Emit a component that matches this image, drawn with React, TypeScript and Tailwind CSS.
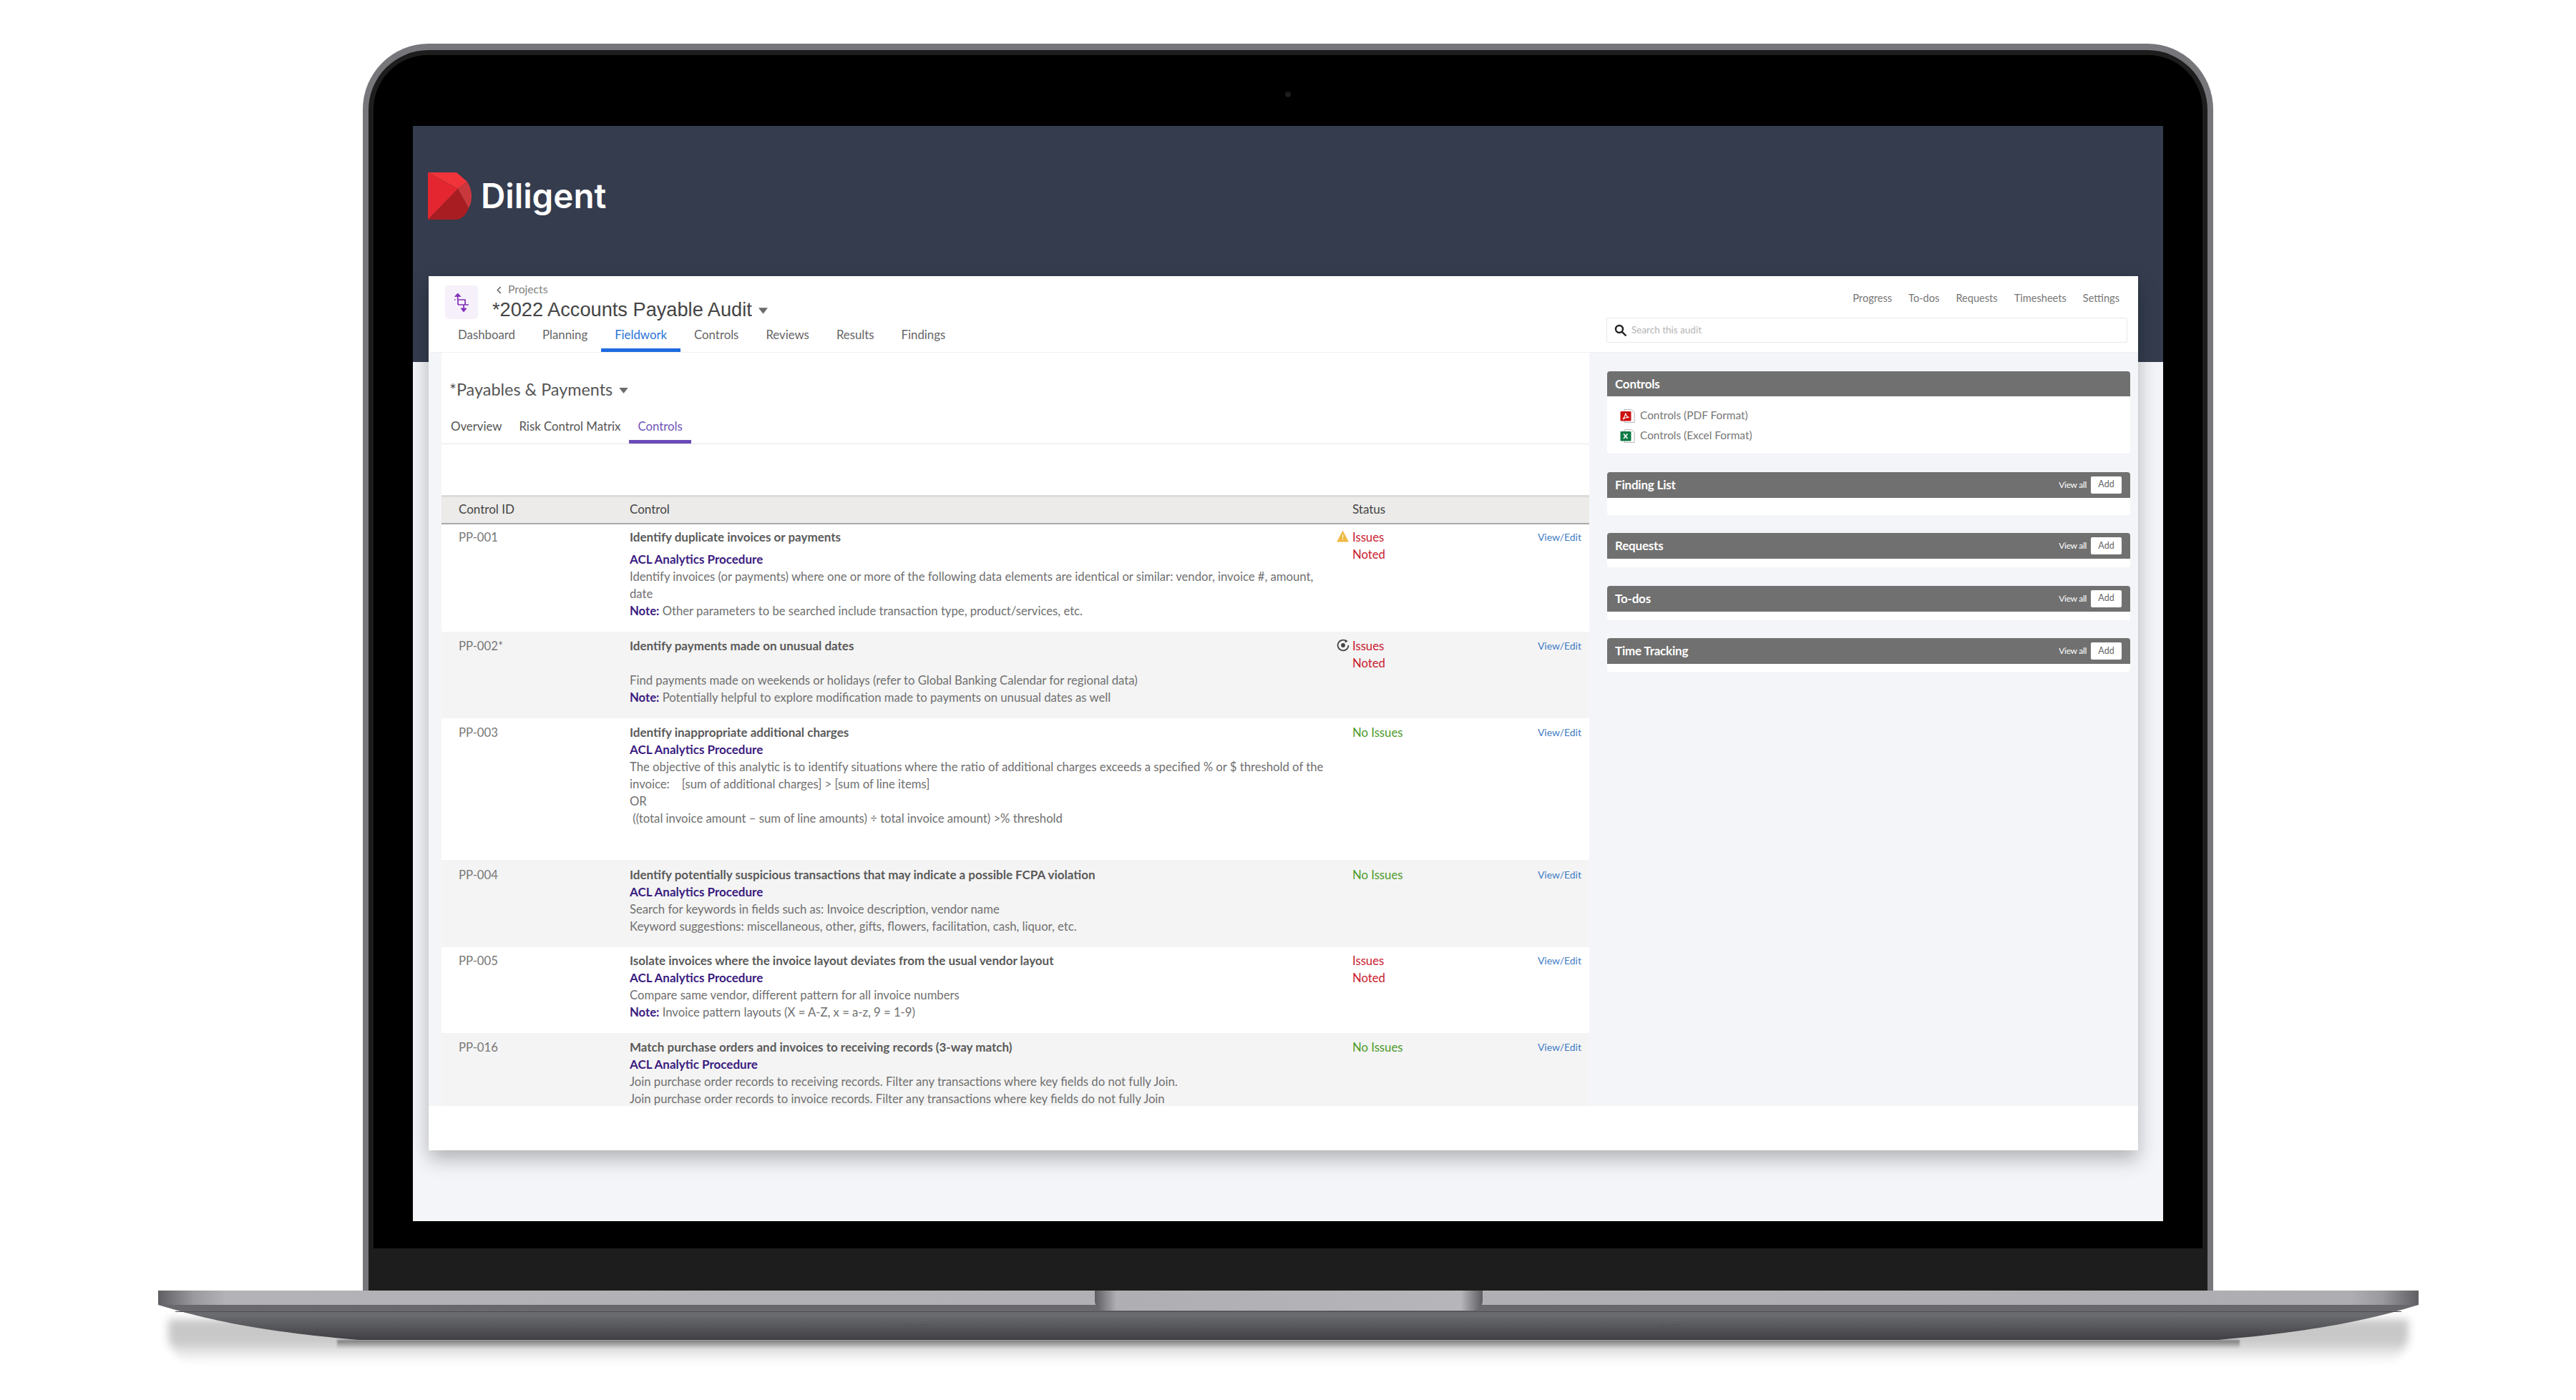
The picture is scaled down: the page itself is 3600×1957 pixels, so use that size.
import React from "react";

const rows = [
  { id: "PP-001", h: "h-[150px]", pt: "pt-[6px]", status: "issues", icon: "warn",
    lines: [["t", "Identify duplicate invoices or payments"], ["a", "ACL Analytics Procedure", "mt-[7px]"],
      ["d", "Identify invoices (or payments) where one or more of the following data elements are identical or similar: vendor, invoice #, amount, date"],
      ["n", "Other parameters to be searched include transaction type, product/services, etc."]] },
  { id: "PP-002*", h: "h-[121px]", pt: "pt-[8px]", status: "issues", icon: "target",
    lines: [["t", "Identify payments made on unusual dates"], ["d", "Find payments made on weekends or holidays (refer to Global Banking Calendar for regional data)", "mt-[24px]"],
      ["n", "Potentially helpful to explore modification made to payments on unusual dates as well"]] },
  { id: "PP-003", h: "h-[198px]", pt: "pt-[8px]", status: "ok",
    lines: [["t", "Identify inappropriate additional charges"], ["a", "ACL Analytics Procedure"],
      ["d", "The objective of this analytic is to identify situations where the ratio of additional charges exceeds a specified % or $ threshold of the invoice:\u00a0\u00a0\u00a0 [sum of additional charges] > [sum of line items]"],
      ["d", "OR"], ["d", "\u00a0((total invoice amount – sum of line amounts) ÷ total invoice amount) >% threshold"]] },
  { id: "PP-004", h: "h-[122px]", pt: "pt-[9px]", status: "ok",
    lines: [["t", "Identify potentially suspicious transactions that may indicate a possible FCPA violation"], ["a", "ACL Analytics Procedure"],
      ["d", "Search for keywords in fields such as: Invoice description, vendor name"],
      ["d", "Keyword suggestions: miscellaneous, other, gifts, flowers, facilitation, cash, liquor, etc."]] },
  { id: "PP-005", h: "h-[120px]", pt: "pt-[7px]", status: "issues",
    lines: [["t", "Isolate invoices where the invoice layout deviates from the usual vendor layout"], ["a", "ACL Analytics Procedure"],
      ["d", "Compare same vendor, different pattern for all invoice numbers"],
      ["n", "Invoice pattern layouts (X = A-Z, x = a-z, 9 = 1-9)"]] },
  { id: "PP-016", h: "h-[103px]", pt: "pt-[8px]", status: "ok",
    lines: [["t", "Match purchase orders and invoices to receiving records (3-way match)"], ["a", "ACL Analytic Procedure"],
      ["d", "Join purchase order records to receiving records. Filter any transactions where key fields do not fully Join."],
      ["d", "Join purchase order records to invoice records. Filter any transactions where key fields do not fully Join"]] },
];

function Caret({ cls }: { cls: string }) {
  return (
    <svg viewBox="0 0 14 9" className={cls}>
      <path d="M0 0H14L7 9Z" fill="#6b6b6b" />
    </svg>
  );
}

function Logo() {
  return (
    <svg viewBox="0 0 61 66" className="w-[61px] h-[66px] shrink-0">
      <path d="M0 0H40L55 13L42 23Z" fill="#f0343a" />
      <path d="M0 0L42 23L0 66Z" fill="#e3262f" />
      <path d="M42 23L57 50C53 60 47 66 38 66H0Z" fill="#a81d22" />
      <path d="M42 23L55 13C59 19 61 26 61 33C61 39 60 45 57 50Z" fill="#c8383c" />
    </svg>
  );
}

function StatusIcon({ kind }: { kind?: string }) {
  if (kind === "warn")
    return (
      <svg viewBox="0 0 17 17" className="w-[17px] h-[17px] mt-[2px]">
        <path d="M8.5 0.5L16.8 16.5H0.2Z" fill="#f0b840" />
        <path d="M7.8 6.5H9.2L9 11.5H8Z M7.8 12.7H9.2V14.1H7.8Z" fill="#fff" />
      </svg>
    );
  if (kind === "target")
    return (
      <svg viewBox="0 0 18 18" className="w-[18px] h-[18px] mt-[2px]" fill="none">
        <path d="M13.6 3.2A7.4 7.4 0 1 0 16.4 9" stroke="#444" strokeWidth="1.8" />
        <path d="M11.5 0.8L15.8 3.3L11.8 5.5Z" fill="#444" />
        <circle cx="9" cy="9" r="2.9" fill="#444" />
      </svg>
    );
  return <div className="w-[18px]" />;
}

function FileIcon({ color, label }: { color: string; label: string }) {
  return (
    <svg viewBox="0 0 21 19" className="w-[21px] h-[19px] shrink-0">
      <path d="M6 0.6H15.5L20.2 4.6V18.4H6Z" fill="#fff" stroke="#b5b5b5" strokeWidth="1" />
      <rect x="0.5" y="3" width="15" height="13.5" rx="1" fill={color} />
      {label === "pdf" ? (
        <path d="M4 14C6 11.5 7.5 8.5 7.8 5.5C8.2 8.5 9.5 10.5 12.5 11.5C9.5 11.2 6.5 12 4 14Z" fill="none" stroke="#fff" strokeWidth="1.2" />
      ) : (
        <path d="M5 6.5L10.5 13M10.5 6.5L5 13" stroke="#fff" strokeWidth="1.7" />
      )}
    </svg>
  );
}

function Widget({ title, h, actions, children }: { title: string; h: string; actions?: boolean; children?: React.ReactNode }) {
  return (
    <div className="rounded-[4px] bg-white">
      <div className={`${h} bg-[#707070] rounded-t-[4px] flex items-center pl-[11px] pr-[12px] text-white`}>
        <span className="text-[17px] font-bold tracking-[-0.2px]">{title}</span>
        {actions && (
          <div className="ml-auto flex items-center gap-[6px]">
            <span className="text-[12px] tracking-[-0.3px]">View all</span>
            <span className="w-[43px] h-[24px] bg-white text-[#666] text-[12.5px] flex items-center justify-center rounded-[2px]">Add</span>
          </div>
        )}
      </div>
      {children}
    </div>
  );
}

export default function App() {
  return (
    <div className="w-[3600px] h-[1957px] bg-white overflow-hidden flex flex-col items-center pt-[61px] [font-family:Lato,sans-serif]">
      {/* Lid */}
      <div className="w-[2586px] h-[1743px] shrink-0 rounded-t-[92px] bg-[#77777b] pt-[9px] px-[8px]">
        <div className="h-full rounded-t-[84px] bg-[#1d1d1d] pt-[7px] px-[7px]">
          <div className="relative h-[1668px] rounded-t-[76px] bg-black pt-[99px] px-[55px]">
            <div className="absolute left-1/2 top-[51px] -ml-[4px] w-[8px] h-[8px] rounded-full bg-[#1c1c1e]" />
            {/* Screen */}
            <div className="h-[1531px] bg-[#f4f5f9] flex flex-col overflow-hidden">
              <div className="h-[330px] shrink-0 bg-[#343c4e] pt-[65px] pl-[21px] flex items-start gap-[13px]">
                <Logo />
                <span className="text-white [font-family:Inter,sans-serif] font-semibold text-[47.5px] leading-[66px]">Diligent</span>
              </div>
              {/* App card */}
              <div className="relative -mt-[120px] ml-[22px] w-[2389px] h-[1222px] shrink-0 bg-white flex flex-col shadow-[0_12px_26px_rgba(0,0,0,0.28)] text-[#555]">
                {/* Header */}
                <div className="h-[107px] shrink-0 flex justify-between border-b border-[#f0f0f4]">
                  <div className="flex flex-col">
                    <div className="h-[64px] flex pl-[23px]">
                      <div className="mt-[13px] w-[46px] h-[47px] rounded-[5px] bg-[#f5f0fa] flex items-center justify-center">
                        <svg viewBox="0 0 22 28" className="w-[22px] h-[28px]" fill="none" stroke="#8230b8" strokeWidth="1.7">
                          <path d="M5.7 5V10M1 10H2.5M5 10H16V17M6 10V17M6 17H21M14 17V22" />
                          <path d="M1.5 5.5L5.7 1L10 5.5Z" fill="#8230b8" strokeWidth="0.8" />
                          <path d="M10 22L14 27L18 22Z" fill="#8230b8" strokeWidth="0.8" />
                        </svg>
                      </div>
                      <div className="mt-[8px] ml-[20px] flex flex-col">
                        <div className="h-[22px] flex items-center text-[15.7px] text-[#808080] pl-[6px]">
                          <svg viewBox="0 0 8 12" className="w-[7px] h-[11px] mr-[9px]" fill="none" stroke="#666" strokeWidth="1.8"><path d="M6.5 1L1.5 6L6.5 11" /></svg>
                          Projects
                        </div>
                        <div className="h-[34px] flex items-center text-[27.2px] text-[#444] [font-family:'Liberation_Sans',sans-serif] whitespace-nowrap">
                          *2022 Accounts Payable Audit
                          <Caret cls="w-[13px] h-[9px] ml-[9px] mt-[2px]" />
                        </div>
                      </div>
                    </div>
                    <div className="h-[43px] flex pl-[22px] text-[16.8px] text-[#666]">
                      {["Dashboard", "Planning", "Fieldwork", "Controls", "Reviews", "Results", "Findings"].map((t) => (
                        <div key={t} className={`px-[19px] pb-[2px] flex items-center border-b-[5px] ${t === "Fieldwork" ? "border-[#1f6be0] text-[#2a74d8]" : "border-transparent"}`}>{t}</div>
                      ))}
                    </div>
                  </div>
                  <div className="w-[743px] pr-[15px] pt-[20px] flex flex-col">
                    <div className="h-[20px] flex justify-end gap-[23px] pr-[11px] text-[14.6px] text-[#777]">
                      {["Progress", "To-dos", "Requests", "Timesheets", "Settings"].map((t) => <span key={t}>{t}</span>)}
                    </div>
                    <div className="mt-[18px] h-[35px] border border-[#e8e8ea] rounded-[2px] flex items-center pl-[10px] gap-[6px]">
                      <svg viewBox="0 0 18 18" className="w-[18px] h-[18px]" fill="none" stroke="#222" strokeWidth="2.4"><circle cx="7" cy="7" r="5" /><path d="M10.8 10.8L16.5 16.5" /></svg>
                      <span className="text-[13.5px] text-[#b5b5b5]">Search this audit</span>
                    </div>
                  </div>
                </div>
                {/* Body */}
                <div className="h-[1053px] shrink-0 flex bg-[#f4f5f8]">
                  <div className="w-[18px] shrink-0" />
                  <div className="w-[1605px] shrink-0 bg-white flex flex-col overflow-hidden border-r border-[#f7f7f7]">
                    <div className="pt-[35px] pl-[11px] h-[83px] shrink-0 flex items-start">
                      <span className="text-[23.4px] leading-[32px] text-[#555] whitespace-nowrap flex items-center">
                        *Payables &amp; Payments
                        <Caret cls="w-[13px] h-[8px] ml-[9px] mt-[3px]" />
                      </span>
                    </div>
                    <div className="h-[45px] shrink-0 flex pl-[1px] border-b border-[#e6e6e6] text-[16.8px]">
                      {["Overview", "Risk Control Matrix", "Controls"].map((t) => (
                        <div key={t} className={`px-[12px] flex items-center border-b-[5px] ${t === "Controls" ? "border-[#6b4cb8] text-[#6f55b8]" : "border-transparent text-[#555]"}`}>{t}</div>
                      ))}
                    </div>
                    <div className="h-[71px] shrink-0" />
                    {/* Table */}
                    <div className="h-[41px] shrink-0 flex items-center pb-[2px] bg-[#ecebe9] border-t-[3px] border-t-[#dddcda] border-b-2 border-b-[#aaaaaa] text-[17px] text-[#444]">
                      <div className="w-[263px] pl-[24px]">Control ID</div>
                      <div className="w-[1010px]">Control</div>
                      <div>Status</div>
                    </div>
                    {rows.map((r, i) => (
                      <div key={r.id} className={`${r.h} ${r.pt} shrink-0 flex overflow-hidden leading-[24px] text-[16.7px] ${i % 2 ? "bg-[#f4f4f4]" : "bg-white"}`}>
                        <div className="w-[263px] shrink-0 pl-[24px] text-[#777]">{r.id}</div>
                        <div className="w-[975px] shrink-0">
                          {r.lines.map((l, j) => {
                            const extra = l[2] ?? "";
                            if (l[0] === "t") return <div key={j} className="font-bold text-[17px] text-[#5a5a5a]">{l[1]}</div>;
                            if (l[0] === "a") return <div key={j} className={`font-bold text-[17px] text-[#3a1b80] ${extra}`}>{l[1]}</div>;
                            if (l[0] === "n") return <div key={j} className="text-[#707070]"><b className="text-[#3a1b80]">Note:</b> {l[1]}</div>;
                            return <div key={j} className={`text-[#707070] ${extra}`}>{l[1]}</div>;
                          })}
                        </div>
                        <div className="flex-1 flex pl-[13px]">
                          <div className="w-[22px] shrink-0"><StatusIcon kind={r.icon} /></div>
                          {r.status === "issues" ? (
                            <div className="text-[#c9202f] w-[60px]">Issues<br />Noted</div>
                          ) : (
                            <div className="text-[#4c9a2a]">No Issues</div>
                          )}
                          <div className="ml-auto pr-[11px] text-[#3f7cc4] text-[14px]">View/Edit</div>
                        </div>
                      </div>
                    ))}
                  </div>
                  {/* Sidebar */}
                  <div className="flex-1 pt-[26px] pl-[24px] pr-[11px] flex flex-col gap-[25.5px] text-[#666]">
                    <Widget title="Controls" h="h-[35px]">
                      <div className="pt-[13px] pb-[11px] pl-[18px] text-[15.4px] text-[#777]">
                        <div className="h-[28px] flex items-center gap-[7px]"><FileIcon color="#cc0f0f" label="pdf" />Controls (PDF Format)</div>
                        <div className="h-[28px] flex items-center gap-[7px]"><FileIcon color="#0f7a45" label="xls" />Controls (Excel Format)</div>
                      </div>
                    </Widget>
                    <Widget title="Finding List" h="h-[36px]" actions><div className="h-[24px]" /></Widget>
                    <Widget title="Requests" h="h-[36px]" actions><div className="h-[12px]" /></Widget>
                    <Widget title="To-dos" h="h-[36px]" actions><div className="h-[12px]" /></Widget>
                    <Widget title="Time Tracking" h="h-[36px]" actions><div className="h-[11px]" /></Widget>
                  </div>
                </div>
                <div className="flex-1 bg-white" />
              </div>
            </div>
          </div>
        </div>
      </div>
      {/* Base */}
      <div className="relative w-[3159px] ml-[1px] h-[69px] shrink-0">
        <div className="absolute left-[14px] right-[14px] top-[40px] h-[62px] rounded-b-[40px] blur-[6px] bg-[linear-gradient(to_bottom,#c8c8c8_0%,#c8c8c8_50%,#e8e8e8_75%,#ffffff_100%)]" />
        <div className="absolute left-[250px] right-[250px] top-[69px] h-[12px] blur-[1px] bg-[linear-gradient(to_bottom,#7a7a7a,rgba(180,180,180,0))]" />
        <div className="relative h-[20px] bg-[linear-gradient(to_right,#5f5f63_0,#9a9a9e_50px,#b3b3b7_95px,#aeaeb2_3064px,#9a9a9e_3109px,#5f5f63_3159px)]" />
        <svg viewBox="0 0 3159 49" className="relative w-[3159px] h-[49px] block">
          <defs>
            <linearGradient id="baseG" x1="0" y1="0" x2="0" y2="1">
              <stop offset="0" stopColor="#68686c" />
              <stop offset="0.3" stopColor="#6a6b6f" />
              <stop offset="1" stopColor="#3f3f44" />
            </linearGradient>
          </defs>
          <path d="M0 0H3159C3099 18 3029 36 2879 49H280C130 36 60 18 0 0Z" fill="url(#baseG)" />
          <path d="M24 9.5H3135" stroke="#4f4f53" strokeWidth="1" />
          <path d="M1046 28H1056M1064 28H1074M2098 28H2108M2116 28H2126" stroke="#55555a" strokeWidth="2" />
        </svg>
        <div className="absolute left-[1309px] top-0 w-[542px] h-[28px] rounded-b-[14px] bg-[linear-gradient(to_right,#5c5c60_0,#aeaeb3_30px,#b5b5ba_512px,#5c5c60_542px)]" />
      </div>
    </div>
  );
}
